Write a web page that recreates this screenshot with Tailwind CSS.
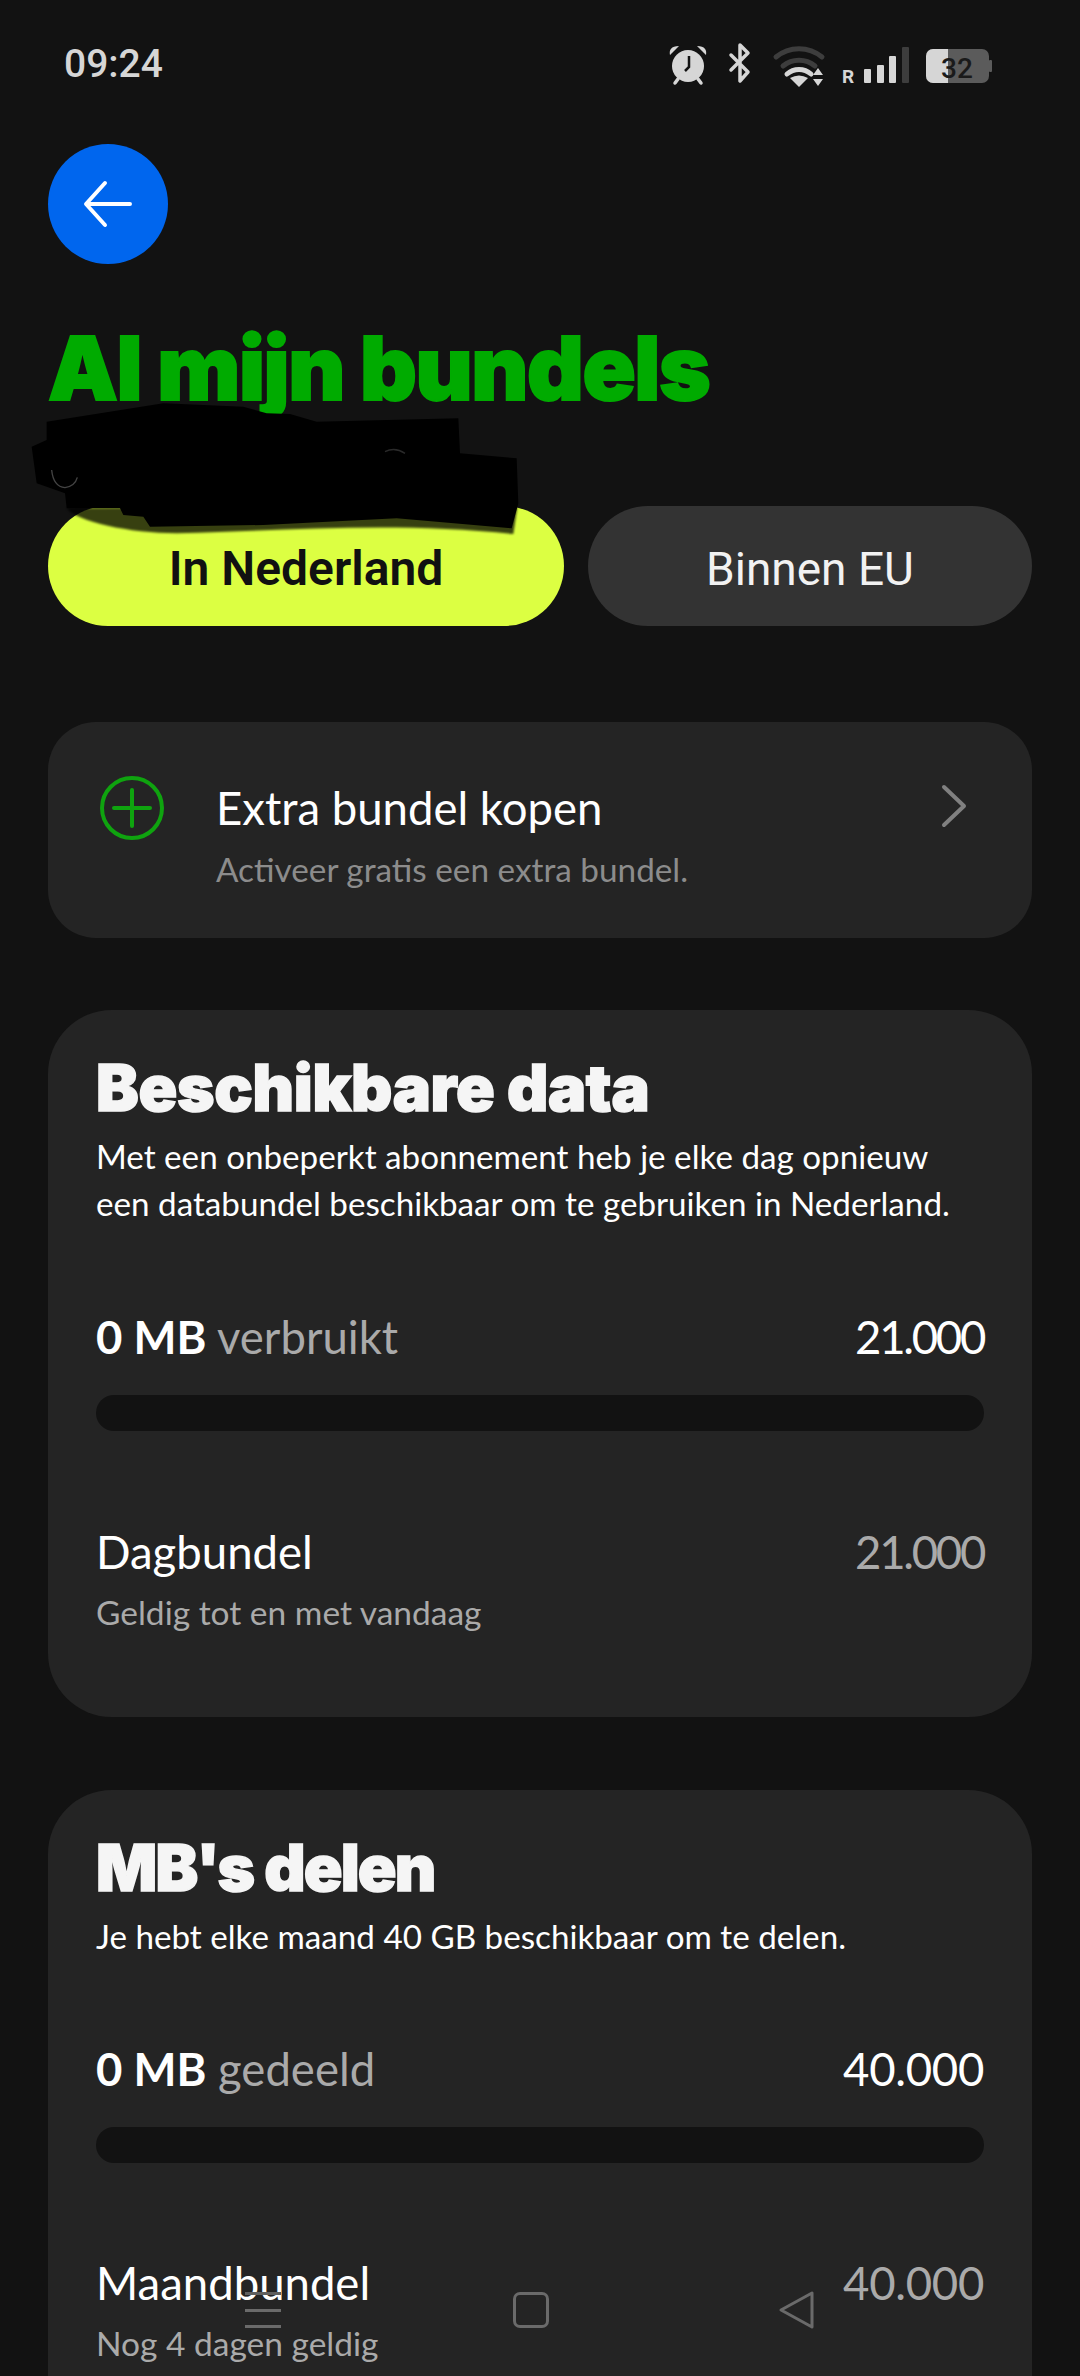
<!DOCTYPE html>
<html lang="nl">
<head>
<meta charset="UTF-8">
<meta name="viewport" content="width=device-width, initial-scale=1.0">
<title>Al mijn bundels</title>
<script src="https://cdn.jsdelivr.net/npm/@tailwindcss/browser@4"></script>
</head>
<body class="bg-[#121212]">
<div class="relative w-[1080px] h-[2376px] overflow-hidden bg-[#121212] text-white font-['Lato',sans-serif]">

  <!-- Status bar -->
  <div class="flex items-center justify-between h-[128px] pl-[64px] pr-[60px]">
    <span class="text-[39px] font-medium text-[#d6d6d6] font-['Roboto',sans-serif]">09:24</span>
    <svg class="w-[400px] h-[80px] mb-[8px]" viewBox="0 0 400 80" fill="#d6d6d6">
      <!-- alarm -->
      <circle cx="68" cy="46" r="16" />
      <path d="M50 35c-1-5 1-9 9-9zM86 35c1-5-1-9-9-9z" />
      <path d="M58 59l-3 4M78 59l3 4" stroke="#d6d6d6" stroke-width="3.5" stroke-linecap="round" />
      <path d="M69 36v11l-4 4" stroke="#121212" stroke-width="2.5" fill="none" />
      <!-- bluetooth -->
      <path d="M111 35l17 17-8 9V25l8 8-17 17" stroke="#d6d6d6" stroke-width="3.5" fill="none" stroke-linejoin="round" stroke-linecap="round" />
      <!-- wifi -->
      <path d="M156 37a36 36 0 0 1 46 0" stroke="#3d3d3d" stroke-width="5" fill="none" stroke-linecap="round" />
      <path d="M163 46a25 25 0 0 1 32 0" stroke="#3d3d3d" stroke-width="5" fill="none" stroke-linecap="round" />
      <path d="M167 54a18 18 0 0 1 24 0" stroke="#d6d6d6" stroke-width="5" fill="none" stroke-linecap="round" />
      <path d="M170 58q9-5 18 0l-9 9z" />
      <path d="M193 55l5-7 5 7zM193 59h10l-5 7z" />
      <!-- signal -->
      <text x="222" y="63" font-size="19" font-weight="700" font-family="Roboto">R</text>
      <rect x="244" y="49" width="7" height="14" rx="1" />
      <rect x="257" y="45" width="7" height="18" rx="1" />
      <rect x="269" y="36" width="7" height="27" rx="1" />
      <rect x="282" y="27" width="7" height="36" rx="1" fill="#3d3d3d" />
      <!-- battery -->
      <rect x="306" y="29" width="63" height="34" rx="7" fill="#5b5b5b" />
      <path d="M313 29h15v34h-15a7 7 0 0 1-7-7V36a7 7 0 0 1 7-7z" />
      <rect x="369" y="40" width="3" height="12" rx="1" fill="#5b5b5b" />
      <text x="321" y="58" font-size="28" font-weight="500" font-family="Roboto" fill="#1a1a1a">32</text>
    </svg>
  </div>

  <div class="px-[48px]">
    <!-- Back button -->
    <div class="mt-[16px] flex items-center justify-center w-[120px] h-[120px] rounded-full bg-[#0066ee]">
      <svg class="w-[60px] h-[60px]" viewBox="0 0 60 60" fill="none" stroke="#fff" stroke-width="4" stroke-linecap="round" stroke-linejoin="round">
        <path d="M52 30H10M27 9L8 30l19 21" />
      </svg>
    </div>

    <h1 class="mt-[56px] text-[88px] leading-[96px] font-black tracking-[-1.4px] text-[#00ab00] [-webkit-text-stroke:2px_#00ab00] font-['Inter',sans-serif]">Al mijn bundels</h1>

    <!-- Tabs -->
    <div class="mt-[90px] flex gap-[24px]">
      <div class="flex items-center justify-center w-[516px] h-[120px] pt-[6px] rounded-full bg-[#dcff42] text-[#111] text-[48px] font-semibold font-['Roboto',sans-serif]">In Nederland</div>
      <div class="flex items-center justify-center flex-1 h-[120px] pt-[6px] rounded-full bg-[#333333] text-[#f2f2f2] text-[46px] font-['Roboto',sans-serif]">Binnen EU</div>
    </div>

    <!-- Extra bundel -->
    <div class="mt-[96px] flex items-start h-[216px] rounded-[48px] bg-[#242424] pl-[52px] pr-[64px] pt-[54px]">
      <svg class="w-[64px] h-[64px] shrink-0" viewBox="0 0 64 64" fill="none" stroke="#0fa30f" stroke-width="4" stroke-linecap="round">
        <circle cx="32" cy="32" r="30" />
        <path d="M32 14v36M14 32h36" />
      </svg>
      <div class="ml-[52px] pt-[3px] flex-1">
        <div class="text-[45.5px] leading-[58px] text-white">Extra bundel kopen</div>
        <div class="mt-[10px] text-[33.3px] leading-[44px] text-[#8c8c8c]">Activeer gratis een extra bundel.</div>
      </div>
      <svg class="mt-[8px] w-[28px] h-[44px]" viewBox="0 0 28 44" fill="none" stroke="#808080" stroke-width="4" stroke-linecap="round" stroke-linejoin="round">
        <path d="M4 3l20 19L4 41" />
      </svg>
    </div>

    <!-- Beschikbare data -->
    <div class="mt-[72px] h-[707px] rounded-[64px] bg-[#242424] px-[48px] pt-[40px]">
      <h2 class="text-[64px] leading-[76px] font-black tracking-[-0.3px] text-[#f5f5f5] [-webkit-text-stroke:1.5px_#f5f5f5] font-['Inter',sans-serif]">Beschikbare data</h2>
      <p class="mt-[7px] text-[33.2px] leading-[47px] text-white">Met een onbeperkt abonnement heb je elke dag opnieuw een databundel beschikbaar om te gebruiken in Nederland.</p>
      <div class="mt-[80px] flex items-center justify-between text-[45.5px] leading-[60px]">
        <div><span class="font-bold text-white">0 MB</span> <span class="text-[#aaaaaa]">verbruikt</span></div>
        <div class="text-white tracking-[-2.3px]">21.000</div>
      </div>
      <div class="mt-[28px] h-[36px] rounded-full bg-[#121212]"></div>
      <div class="mt-[91px] flex items-center justify-between text-[45.5px] leading-[60px]">
        <div class="text-white">Dagbundel</div>
        <div class="text-[#aaaaaa] tracking-[-2.3px]">21.000</div>
      </div>
      <div class="mt-[8px] text-[33.5px] leading-[44px] text-[#aaaaaa]">Geldig tot en met vandaag</div>
    </div>

    <!-- MB's delen -->
    <div class="mt-[73px] h-[700px] rounded-[64px] bg-[#242424] px-[48px] pt-[40px]">
      <h2 class="text-[64px] leading-[76px] font-black tracking-[-1.8px] text-[#f5f5f5] [-webkit-text-stroke:1.5px_#f5f5f5] font-['Inter',sans-serif]">MB's delen</h2>
      <p class="mt-[7px] text-[33.2px] leading-[47px] text-white">Je hebt elke maand 40 GB beschikbaar om te delen.</p>
      <div class="mt-[79px] flex items-center justify-between text-[45.5px] leading-[60px]">
        <div><span class="font-bold text-white">0 MB</span> <span class="text-[#aaaaaa]">gedeeld</span></div>
        <div class="text-white tracking-[-0.3px]">40.000</div>
      </div>
      <div class="mt-[28px] h-[36px] rounded-full bg-[#121212]"></div>
      <div class="mt-[90px] flex items-center justify-between text-[45.5px] leading-[60px]">
        <div class="text-white">Maandbundel</div>
        <div class="text-[#aaaaaa] tracking-[-0.3px]">40.000</div>
      </div>
      <div class="mt-[8px] text-[33.5px] leading-[44px] text-[#aaaaaa]">Nog 4 dagen geldig</div>
    </div>
  </div>

  <!-- Redaction scribble over the phone number -->
  <svg class="absolute left-[30px] top-[390px] w-[520px] h-[170px]" viewBox="0 0 1560 510">
    <path class="blur-[3px]" fill="#000" fill-opacity="0.75" d="M110 355C140 395 300 430 440 430 800 420 1100 395 1450 432L1462 350Z" />
    <path class="blur-[1px]" fill="#000" d="M50 95L400 40 640 50 710 70 780 72 860 95 1285 85 1290 190 1460 205 1465 340 1445 415 1100 385 700 405 360 410 340 380 280 375 270 355 110 355 105 310 20 280 5 170 50 150Z" />
    <path fill="none" stroke="#444" stroke-width="4" d="M65 240Q70 290 105 293 135 288 142 262" />
    <path fill="none" stroke="#2a2a2a" stroke-width="4" d="M1065 185Q1095 170 1125 190" />
  </svg>

  <!-- Navigation bar -->
  <div class="absolute left-0 bottom-0 w-full h-[100px]">
    <div class="absolute left-[245px] top-[16px] w-[36px] flex flex-col gap-[13.5px]">
      <div class="h-[3px] bg-[#5f5f5f]"></div>
      <div class="h-[3px] bg-[#6a6a6a]"></div>
      <div class="h-[3px] bg-[#6a6a6a]"></div>
    </div>
    <div class="absolute left-[513px] top-[16px] w-[36px] h-[36px] rounded-[7px] border-[3px] border-[#6a6a6a]"></div>
    <svg class="absolute left-[776px] top-[14px] w-[40px] h-[40px]" viewBox="0 0 40 40" fill="none" stroke="#6a6a6a" stroke-width="3" stroke-linejoin="round">
      <path d="M36 3v34L5 20z" />
    </svg>
  </div>
</div>
</body>
</html>
